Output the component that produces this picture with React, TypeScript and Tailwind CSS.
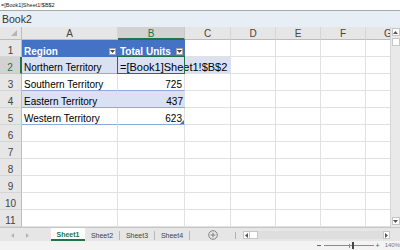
import React from 'react';

type Row = { region: string; units: string };

const tableRows: Row[] = [
  { region: 'Northern Territory', units: '' },
  { region: 'Southern Territory', units: '725' },
  { region: 'Eastern Territory', units: '437' },
  { region: 'Western Territory', units: '623' },
];

const columns = ['A', 'B', 'C', 'D', 'E', 'F', 'G'];
const sheets = ['Sheet1', 'Sheet2', 'Sheet3', 'Sheet4'];

const FilterButton = () => (
  <span className="absolute right-[2px] bottom-[2px] flex h-[7px] w-[7px] items-center justify-center border border-[#a6a6a6] bg-white">
    <svg width="5" height="3" viewBox="0 0 5 3">
      <path d="M0 0h5L2.5 3z" fill="#444" />
    </svg>
  </span>
);

const EmptyCell = () => <div className="h-[17px] border-r border-b border-[#e1e1e1]" />;

const RowHeader = ({ n, active }: { n: number; active?: boolean }) =>
  active ? (
    <div className="flex h-[17px] items-end justify-center border-r-2 border-b border-r-[#217346] border-b-[#c8c8c8] bg-[#d2d2d2] text-[10px] leading-[10px] text-[#217346]">
      {n}
    </div>
  ) : (
    <div className="flex h-[17px] items-end justify-center border-r border-b border-r-[#bcbcbc] border-b-[#d5d5d5] bg-[#e6e6e6] text-[10px] leading-[10px] text-[#444]">
      {n}
    </div>
  );

const App = () => {
  return (
    <div className="flex h-[250px] w-[400px] flex-col overflow-hidden bg-white font-['Liberation_Sans',Arial,sans-serif] text-black">
      {/* formula strip */}
      <div className="h-[11px] border-b border-[#a8a8a8] px-[1px] text-[5.5px] leading-[10px] text-[#222]">=[Book1]Sheet1!$B$2</div>

      {/* window title */}
      <div className="h-[16px] bg-[#e8eef6] px-[2px] text-[10.5px] leading-[16px] text-[#333]">Book2</div>

      <div className="flex h-[200px]">
        <div className="w-[390px] overflow-hidden">
          <div className="grid w-[411px] grid-cols-[22px_96px_67px_46px_45px_45px_45px_45px]">
            {/* column headers */}
            <div className="relative h-[13px] border-r border-b border-r-[#bcbcbc] border-b-[#bcbcbc] bg-[#e6e6e6]">
              <svg className="absolute right-[4px] bottom-[3px]" width="6" height="6" viewBox="0 0 6 6">
                <path d="M6 0V6H0z" fill="#b5b5b5" />
              </svg>
            </div>
            {columns.map((c) =>
              c === 'B' ? (
                <div
                  key={c}
                  className="flex h-[13px] items-center justify-center border-r border-b-2 border-r-[#c8c8c8] border-b-[#217346] bg-[#d2d2d2] pt-[2px] text-[10px] leading-[10px] text-[#217346]"
                >
                  {c}
                </div>
              ) : (
                <div
                  key={c}
                  className="flex h-[13px] items-center justify-center border-r border-b border-r-[#d5d5d5] border-b-[#bcbcbc] bg-[#e6e6e6] pt-px text-[10px] leading-[10px] text-[#444]"
                >
                  {c}
                </div>
              ),
            )}

            {/* row 1: table header */}
            <RowHeader n={1} />
            <div className="relative flex h-[17px] items-end bg-[#4472c4] pl-[2px] text-[10px] leading-[11px] font-bold text-white">
              Region
              <FilterButton />
            </div>
            <div className="relative flex h-[17px] items-end bg-[#4472c4] pl-[2px] text-[10px] leading-[11px] font-bold text-white">
              Total Units
              <FilterButton />
            </div>
            {[0, 1, 2, 3, 4].map((i) => (
              <EmptyCell key={i} />
            ))}

            {/* rows 2-5: table body */}
            {tableRows.map((row, i) => {
              const n = i + 2;
              const banded = i % 2 === 0;
              return (
                <React.Fragment key={row.region}>
                  <RowHeader n={n} active={n === 2} />
                  <div
                    className={
                      banded
                        ? 'flex h-[17px] items-end border-b border-[#8ea9db] bg-[#d9e1f2] pl-[2px] text-[10px] leading-[10px]'
                        : 'flex h-[17px] items-end border-r border-b border-r-[#e1e1e1] border-b-[#8ea9db] pl-[2px] text-[10px] leading-[10px]'
                    }
                  >
                    {row.region}
                  </div>
                  {n === 2 ? (
                    <div className="relative h-[17px] border-b border-[#8ea9db] bg-[#d9e1f2]">
                      <div className="absolute top-0 left-0 z-10 flex h-[16px] w-[113px] items-end bg-[#d9e1f2] pl-[2px] text-[11px] leading-[11px] whitespace-nowrap">
                        =[Book1]Sheet1!$B$2
                      </div>
                      <div className="pointer-events-none absolute -top-px -left-px z-20 h-[18px] w-[68px] border border-[#217346]" />
                    </div>
                  ) : (
                    <div
                      className={
                        banded
                          ? 'relative flex h-[17px] items-end justify-end border-b border-[#8ea9db] bg-[#d9e1f2] pr-[2px] text-[10px] leading-[10px]'
                          : 'relative flex h-[17px] items-end justify-end border-r border-b border-r-[#e1e1e1] border-b-[#8ea9db] pr-[2px] text-[10px] leading-[10px]'
                      }
                    >
                      {row.units}
                      {n === 5 && (
                        <svg className="absolute right-0 bottom-0" width="4" height="4" viewBox="0 0 4 4">
                          <path d="M4 0V4H0z" fill="#4472c4" />
                        </svg>
                      )}
                    </div>
                  )}
                  {[0, 1, 2, 3, 4].map((j) => (
                    <EmptyCell key={j} />
                  ))}
                </React.Fragment>
              );
            })}

            {/* rows 6-11 */}
            {[6, 7, 8, 9, 10, 11].map((n) => (
              <React.Fragment key={n}>
                <RowHeader n={n} />
                {[0, 1, 2, 3, 4, 5, 6].map((j) => (
                  <EmptyCell key={j} />
                ))}
              </React.Fragment>
            ))}
          </div>
        </div>

        {/* vertical scrollbar */}
        <div className="flex w-[10px] flex-col items-center border-l border-[#d4d4d4] bg-[#e9e9e9] pt-px pb-[2px]">
          <div className="flex h-[8px] w-[8px] items-center justify-center border border-[#c6c6c6] bg-white">
            <svg width="5" height="3" viewBox="0 0 5 3">
              <path d="M2.5 0L5 3H0z" fill="#555" />
            </svg>
          </div>
          <div className="mt-[2px] h-[8px] w-[8px] border border-[#c6c6c6] bg-white" />
          <div className="flex-1" />
          <div className="flex h-[8px] w-[8px] items-center justify-center border border-[#c6c6c6] bg-white">
            <svg width="5" height="3" viewBox="0 0 5 3">
              <path d="M0 0h5L2.5 3z" fill="#555" />
            </svg>
          </div>
        </div>
      </div>

      {/* sheet tabs */}
      <div className="flex h-[14px] items-stretch border-t border-[#c6c6c6] bg-[#e6e6e6] text-[7px] leading-[8px] text-[#444]">
        <div className="flex w-[51px] items-center pt-px pl-[11px]">
          <svg width="3" height="5" viewBox="0 0 3 5">
            <path d="M3 0V5L0 2.5z" fill="#b4b4b4" />
          </svg>
          <svg className="ml-[12px]" width="3" height="5" viewBox="0 0 3 5">
            <path d="M0 0V5L3 2.5z" fill="#b4b4b4" />
          </svg>
        </div>
        {sheets.map((s, i) =>
          i === 0 ? (
            <div
              key={s}
              className="flex w-[34px] items-center justify-center border-b-2 border-[#217346] bg-white pt-[2px] font-bold text-[#217346]"
            >
              {s}
            </div>
          ) : (
            <div key={s} className="flex w-[35px] items-center pt-[2px]">
              <span className="flex-1 text-center">{s}</span>
              <span className="h-[9px] w-px bg-[#b8b8b8]" />
            </div>
          ),
        )}
        <div className="ml-[18px] flex items-center pt-px">
          <svg width="10" height="10" viewBox="0 0 10 10">
            <circle cx="5" cy="5" r="4.3" fill="none" stroke="#777" strokeWidth="0.9" />
            <path d="M5 2.6V7.4M2.6 5H7.4" stroke="#777" strokeWidth="0.9" />
          </svg>
        </div>
        <div className="ml-[17px] flex items-center pt-px">
          <span className="h-[7px] w-px bg-[#b0b0b0]" />
        </div>
        <div className="ml-[7px] flex w-[147px] items-center pt-px">
          <div className="flex h-[8px] w-full">
            <div className="flex w-[7px] items-center justify-center border border-[#c6c6c6] bg-white">
              <svg width="3" height="5" viewBox="0 0 3 5">
                <path d="M3 0V5L0 2.5z" fill="#555" />
              </svg>
            </div>
            <div className="w-[8px] border-y border-r border-[#c6c6c6] bg-white" />
            <div className="flex-1 bg-[#dedede]" />
            <div className="flex w-[7px] items-center justify-center border border-[#c6c6c6] bg-white">
              <svg width="3" height="5" viewBox="0 0 3 5">
                <path d="M0 0V5L3 2.5z" fill="#555" />
              </svg>
            </div>
          </div>
        </div>
      </div>

      {/* status bar */}
      <div className="flex h-[9px] items-center justify-end bg-[#f3f3f3] text-[6px] leading-[9px] text-[#777]">
        <span className="h-px w-[4px] bg-[#666]" />
        <div className="relative ml-[3px] flex w-[50px] items-center">
          <span className="h-px w-full bg-[#8a8a8a]" />
          <span className="absolute left-[25px] h-[4px] w-px bg-[#8a8a8a]" />
          <span className="absolute left-[28px] h-[7px] w-[2px] bg-[#444]" />
        </div>
        <span className="ml-[2px] text-[7px] text-[#555]">+</span>
        <span className="ml-[5px]">140%</span>
      </div>
    </div>
  );
};

export default App;
